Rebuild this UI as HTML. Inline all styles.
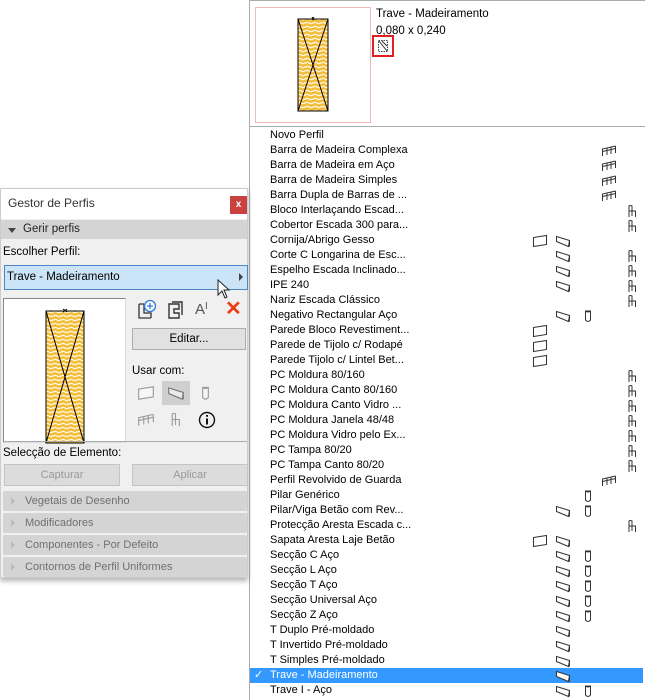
<!DOCTYPE html>
<html><head><meta charset="utf-8"><style>
*{margin:0;padding:0;box-sizing:border-box}
body{width:645px;height:700px;background:#fff;position:relative;overflow:hidden;font-family:"Liberation Sans",sans-serif;font-size:11px;color:#000}
.abs{position:absolute}
#rp{left:249px;top:0;width:396px;height:700px;border-left:1px solid #aaa;border-top:1px solid #aaa;background:#fff}
.row{position:absolute;left:250px;width:393px;height:15px;line-height:15px;padding-left:20px;white-space:nowrap}
.row.sel{background:#3399ff;color:#fff}
.ic{position:absolute;top:1px}
#lp{left:0;top:188px;width:248px;height:390px;background:#f0f0f0;border:1px solid #ccc;box-shadow:0 3px 5px rgba(0,0,0,.3)}
.hdr{position:absolute;left:2px;width:244px;height:20px;line-height:20px;background:#d4d4d4;color:#707070;font-size:11px;padding-left:22px;border-radius:2px}
.hdr:before{content:"";position:absolute;left:8px;top:6px;border-left:4px solid #bbb;border-top:4px solid transparent;border-bottom:4px solid transparent}
.btn{position:absolute;height:22px;line-height:20px;text-align:center;background:#e1e1e1;border:1px solid #adadad}
</style></head><body>
<svg width="0" height="0" style="position:absolute">
<defs>
<pattern id="wood" width="8" height="4" patternUnits="userSpaceOnUse"><rect width="8" height="4" fill="#f2bd3c"/><path d="M0 2.5 Q2 0.5 4 2 T8 1.5" stroke="#fff8e0" stroke-width="1.2" fill="none"/></pattern>
<symbol id="wall" viewBox="0 0 16 14"><path d="M1.5 3.5 L14.5 1.5 L14.5 10.5 L1.5 12.5Z" fill="#fff" stroke="#333"/></symbol>
<symbol id="beam" viewBox="0 0 16 14"><path d="M1.5 2.5 L14.5 6.5 L13.5 12.5 L1.5 7.5Z M1.5 2.5 L1.5 7.5 M14.5 6.5 L14.5 12.5" fill="#fff" stroke="#333"/></symbol>
<symbol id="col" viewBox="0 0 8 14"><path d="M1.5 2 L6.5 2 L6.5 11 Q4 14 1.5 11Z M1.5 2 Q4 4 6.5 2" fill="#fff" stroke="#333"/></symbol>
<symbol id="rail" viewBox="0 0 16 14"><path d="M1.5 12 L1.5 5 L14.5 2 M1.5 7.5 L14.5 4.5 M6 11 L6 4 M10 10 L10 3 M14.5 9 L14.5 2" fill="none" stroke="#333"/></symbol>
<symbol id="chair" viewBox="0 0 10 14"><path d="M2 13 L2 2 Q3 1 5 2 L5 7 L8.5 7 L8.5 13 M2 7 L5 7 M5 7 L5 12" fill="none" stroke="#333"/></symbol>
</defs></svg>

<div id="rp" class="abs"></div>
<div class="abs" style="left:255px;top:7px;width:116px;height:116px;border:1px solid #f4b8b8;background:#fff"></div>
<svg class="abs" style="left:297px;top:17px" width="34" height="96"><rect x="1" y="2" width="30" height="92" fill="url(#wood)" stroke="#000"/><path d="M1 2 L31 94 M31 2 L1 94" stroke="#000" fill="none"/><path d="M15 0 L17 3 M17 0 L15 3" stroke="#000"/></svg>
<div class="abs" style="left:376px;top:8px;font-size:11.5px">Trave - Madeiramento</div>
<div class="abs" style="left:376px;top:25px;font-size:11.5px">0,080 x 0,240</div>
<div class="abs" style="left:372px;top:35px;width:22px;height:22px;border:2px solid #e02020"></div>
<svg class="abs" style="left:377px;top:39px" width="12" height="14"><rect x="1.5" y="1.5" width="9" height="11" fill="#fff" stroke="#444" stroke-dasharray="1.5 1"/><path d="M2 2 L10 12 M5 2 L10 7" stroke="#333"/></svg>
<div class="abs" style="left:250px;top:126px;width:395px;height:1px;background:#aaa"></div>

<div id="list"></div>
<script>
var L=[["Novo Perfil",""],["Barra de Madeira Complexa","r"],["Barra de Madeira em Aço","r"],["Barra de Madeira Simples","r"],["Barra Dupla de Barras de ...","r"],["Bloco Interlaçando Escad...","h"],["Cobertor Escada 300 para...","h"],["Cornija/Abrigo Gesso","wb"],["Corte C Longarina de Esc...","bh"],["Espelho Escada Inclinado...","bh"],["IPE 240","bh"],["Nariz Escada Clássico","h"],["Negativo Rectangular Aço","bc"],["Parede Bloco Revestiment...","w"],["Parede de Tijolo c/ Rodapé","w"],["Parede Tijolo c/ Lintel Bet...","w"],["PC Moldura 80/160","h"],["PC Moldura Canto 80/160","h"],["PC Moldura Canto Vidro ...","h"],["PC Moldura Janela 48/48","h"],["PC Moldura Vidro pelo Ex...","h"],["PC Tampa 80/20","h"],["PC Tampa Canto 80/20","h"],["Perfil Revolvido de Guarda","r"],["Pilar Genérico","c"],["Pilar/Viga Betão com Rev...","bc"],["Protecção Aresta Escada c...","h"],["Sapata Aresta Laje Betão","wb"],["Secção C Aço","bc"],["Secção L Aço","bc"],["Secção T Aço","bc"],["Secção Universal Aço","bc"],["Secção Z Aço","bc"],["T Duplo Pré-moldado","b"],["T Invertido Pré-moldado","b"],["T Simples Pré-moldado","b"],["Trave - Madeiramento","b"],["Trave I - Aço","bc"]];
var P={w:[282,16,"wall"],b:[305,16,"beam"],c:[334,8,"col"],r:[351,16,"rail"],h:[377,10,"chair"]};
var s="";L.forEach(function(x,i){var t=128+15*i;s+='<div class="row'+(i==36?' sel':'')+'" style="top:'+t+'px">'+(i==36?'<span style="position:absolute;left:4px">✓</span>':'')+x[0];
x[1].split("").forEach(function(k){var p=P[k];s+='<svg class="ic" style="left:'+p[0]+'px" width="'+p[1]+'" height="14"><use href="#'+p[2]+'"/></svg>';});s+='</div>';});
document.getElementById("list").innerHTML=s;
</script>

<div id="lp" class="abs">
 <div class="abs" style="left:0;top:0;width:246px;height:30px;background:#fff;line-height:28px;padding-left:7px;font-size:12px;color:#333">Gestor de Perfis</div>
 <div class="abs" style="left:229px;top:7px;width:17px;height:18px;background:#c9423f;color:#fff;text-align:center;line-height:17px;font-size:10px;font-weight:bold">x</div>
 <div class="abs" style="left:0;top:31px;width:246px;height:19px;background:#d4d4d4;line-height:19px;padding-left:22px;font-size:11.5px;color:#222">Gerir perfis</div>
 <div class="abs" style="left:7px;top:39px;border-top:5px solid #444;border-left:4px solid transparent;border-right:4px solid transparent"></div>
 <div class="abs" style="left:2px;top:57px;font-size:11.5px">Escolher Perfil:</div>
 <div class="abs" style="left:3px;top:76px;width:244px;height:25px;background:#cce4f7;border:1px solid #4a87c4;line-height:23px;padding-left:2px;font-size:11.5px">Trave - Madeiramento</div>
 <div class="abs" style="left:238px;top:84px;border-left:4px solid #444;border-top:4px solid transparent;border-bottom:4px solid transparent"></div>
 <svg class="abs" style="left:216px;top:90px" width="18" height="22"><path d="M1 1 L1 16 L5 12 L8 19 L10 18 L7 11 L12 11Z" fill="#fff" stroke="#222"/></svg>
 <div class="abs" style="left:2px;top:109px;width:123px;height:145px;background:#fff;border:1px solid #888;border-right-color:#ddd;border-bottom-color:#ddd"></div>
 <svg class="abs" style="left:44px;top:117px" width="42" height="138"><rect x="1" y="5" width="38" height="132" fill="url(#wood)" stroke="#000"/><path d="M1 5 L39 137 M39 5 L1 137" stroke="#000" fill="none"/><path d="M18 3 L22 6 M22 3 L18 6" stroke="#000"/></svg>
 <svg class="abs" style="left:135px;top:110px" width="22" height="22"><path d="M3 5 L3 19 L15 19 M3 5 L8 5 M8 5 L8 14 L15 14 L15 19" fill="none" stroke="#333" stroke-width="1.3"/><circle cx="14" cy="7" r="5.5" fill="#fff" stroke="#2a7ad6" stroke-width="1.3"/><path d="M14 4 L14 10 M11 7 L17 7" stroke="#2a7ad6" stroke-width="1.3"/></svg>
 <svg class="abs" style="left:165px;top:110px" width="20" height="22"><path d="M3 5 L3 19 L13 19 L13 14 L8 14 L8 10 L13 10 L13 5Z M6 3 L16 3 L16 16" fill="none" stroke="#333" stroke-width="1.4"/></svg>
 <div class="abs" style="left:194px;top:112px;font-size:15px;color:#555">A<span style="font-size:10px;vertical-align:top">I</span></div>
 <div class="abs" style="left:224px;top:107px;font-size:20px;color:#f03a17;font-weight:bold">✕</div>
 <div class="btn" style="left:131px;top:139px;width:114px;font-size:11.5px">Editar...</div>
 <div class="abs" style="left:131px;top:176px;font-size:11.5px">Usar com:</div>
 <div class="abs" style="left:161px;top:192px;width:28px;height:24px;background:#cfcfcf"></div>
 <svg class="abs" style="left:136px;top:196px" width="18" height="16" opacity=".45"><use href="#wall"/></svg>
 <svg class="abs" style="left:166px;top:196px" width="18" height="16" opacity=".55"><use href="#beam"/></svg>
 <svg class="abs" style="left:200px;top:196px" width="9" height="16" opacity=".45"><use href="#col"/></svg>
 <svg class="abs" style="left:136px;top:223px" width="18" height="16" opacity=".45"><use href="#rail"/></svg>
 <svg class="abs" style="left:169px;top:222px" width="11" height="17" opacity=".45"><use href="#chair"/></svg>
 <svg class="abs" style="left:197px;top:222px" width="18" height="18"><circle cx="9" cy="9" r="7.5" fill="none" stroke="#111" stroke-width="1.4"/><path d="M9 7.5 L9 13.5 M9 4 L9 5.8" stroke="#111" stroke-width="2"/></svg>
 <div class="abs" style="left:2px;top:252px;width:244px;height:1px;background:#aaa"></div>
 <div class="abs" style="left:2px;top:258px;font-size:11.5px">Selecção de Elemento:</div>
 <div class="btn" style="left:3px;top:275px;width:116px;color:#999;background:#dcdcdc;border-color:#c4c4c4">Capturar</div>
 <div class="btn" style="left:131px;top:275px;width:116px;color:#999;background:#dcdcdc;border-color:#c4c4c4">Aplicar</div>
 <div class="hdr" style="top:302px">Vegetais de Desenho</div>
 <div class="hdr" style="top:324px">Modificadores</div>
 <div class="hdr" style="top:346px">Componentes - Por Defeito</div>
 <div class="hdr" style="top:368px">Contornos de Perfil Uniformes</div>
</div>
</body></html>
